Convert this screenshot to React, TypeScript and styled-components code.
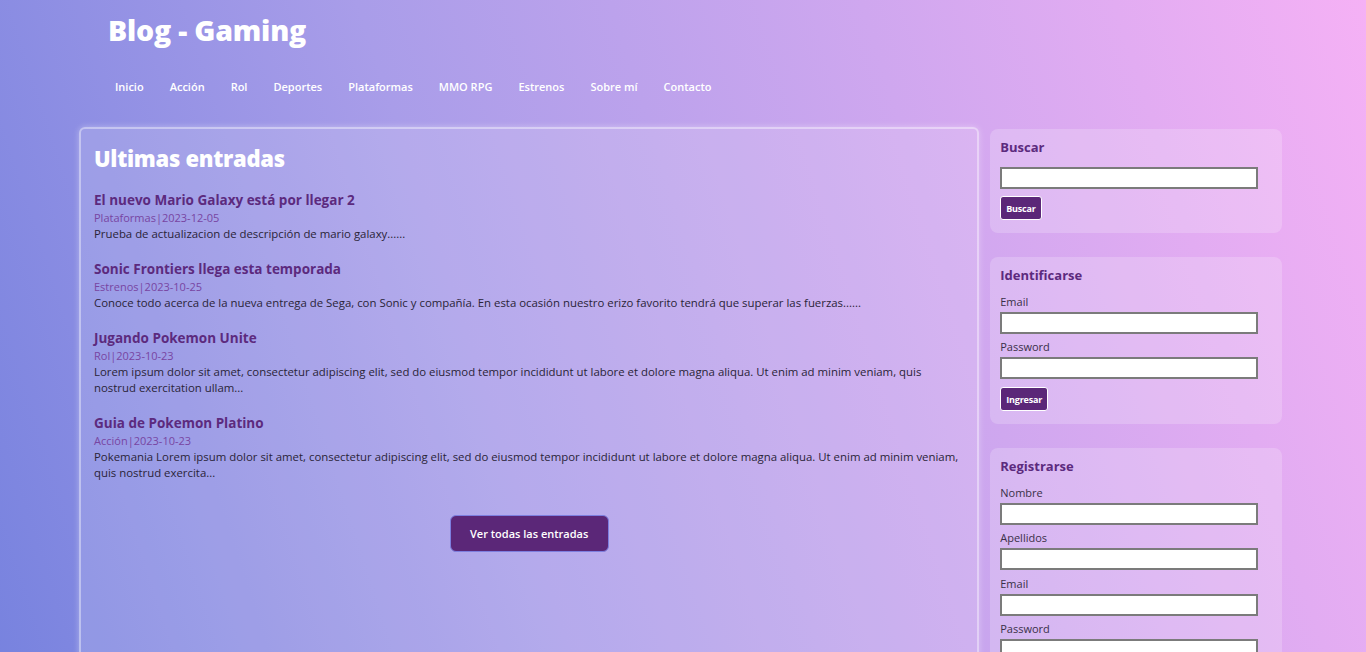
import React from "react";
import styled, { createGlobalStyle } from "styled-components";

const GlobalStyle = createGlobalStyle`
  html {
    background: linear-gradient(72deg, #6f7edd 0%, #a99de9 40%, #f5b1f5 100%);
    min-height: 100%;
  }
  body {
    margin: 0;
    font-family: "Open Sans", "Noto Sans", sans-serif;
    color: #2b2540;
  }
  * { box-sizing: border-box; }
`;

const Page = styled.div`
  width: 1203px;
  margin-left: 79px;
  padding-bottom: 264px;
`;

const Header = styled.header`
  display: flex;
  flex-direction: column;
  padding-top: 9px;
`;

const SiteTitle = styled.h1`
  margin: 0 0 0 29px;
  font-size: 28.5px;
  line-height: 42px;
  font-weight: 800;
  color: #ffffff;
  letter-spacing: -0.2px;
`;

const Nav = styled.nav`
  display: flex;
  margin: 27px 0 0 23px;
`;

const NavLink = styled.a`
  padding: 0 13px;
  font-size: 11px;
  line-height: 17px;
  font-weight: 600;
  color: #ffffff;
  text-decoration: none;
`;

const Layout = styled.div`
  display: flex;
  align-items: stretch;
  gap: 11px;
  margin-top: 32px;
`;

const Main = styled.main`
  width: 901px;
  padding: 13px 13px 40px;
  background: rgba(255, 255, 255, 0.14);
  border: 2px solid rgba(255, 255, 255, 0.4);
  border-radius: 6px;
  box-shadow: 0 0 6px rgba(255, 255, 255, 0.35);
  display: flex;
  flex-direction: column;
`;

const SectionTitle = styled.h2`
  margin: 0 0 15px;
  font-size: 22px;
  line-height: 33px;
  font-weight: 800;
  color: #ffffff;
  letter-spacing: -0.3px;
`;

const Post = styled.article`
  margin-bottom: 17px;
`;

const PostTitle = styled.h3`
  margin: 0;
  font-size: 13.5px;
  line-height: 20px;
  font-weight: 700;
  color: #5c2a7e;
`;

const PostMeta = styled.div`
  font-size: 11px;
  line-height: 16px;
  color: #7845a2;
`;

const PostText = styled.p`
  margin: 0;
  font-size: 11.4px;
  line-height: 16px;
  color: #2a2438;
`;

const MoreButton = styled.button`
  align-self: center;
  margin-top: 17px;
  width: 159px;
  height: 37px;
  background: #5b2778;
  color: #ffffff;
  border: 1px solid #7d7fe0;
  border-radius: 6px;
  font-family: inherit;
  font-size: 11px;
  font-weight: 600;
  cursor: pointer;
`;

const Sidebar = styled.aside`
  width: 292px;
  display: flex;
  flex-direction: column;
  gap: 24px;
  padding-top: 2px;
`;

const Widget = styled.section`
  padding: 8px 10px 13px;
  background: rgba(255, 255, 255, 0.2);
  border-radius: 8px;
  display: flex;
  flex-direction: column;
  align-items: flex-start;
`;

const WidgetTitle = styled.h4<{ $gap: number }>`
  margin: 0 0 ${(p) => p.$gap}px;
  font-size: 13px;
  line-height: 20px;
  font-weight: 700;
  color: #5c2a7e;
`;

const Field = styled.div`
  display: flex;
  flex-direction: column;
  margin-bottom: 6.5px;
`;

const Label = styled.label`
  font-size: 11px;
  line-height: 14px;
  margin-bottom: 3px;
  color: #3a3048;
`;

const Input = styled.input`
  width: 258px;
  height: 22px;
  border: 2px solid #7b7b7b;
  background: #ffffff;
  padding: 0 4px;
  font-family: inherit;
`;

const SmallButton = styled.button<{ $top: number }>`
  margin-top: ${(p) => p.$top}px;
  height: 24px;
  padding: 0 5px;
  background: #5b2778;
  color: #ffffff;
  border: 1px solid #ffffff;
  border-radius: 3px;
  font-family: inherit;
  font-size: 9px;
  font-weight: 700;
  letter-spacing: -0.2px;
  cursor: pointer;
`;

const Footer = styled.footer``;

const navItems = [
  "Inicio",
  "Acción",
  "Rol",
  "Deportes",
  "Plataformas",
  "MMO RPG",
  "Estrenos",
  "Sobre mí",
  "Contacto",
];

const posts = [
  {
    title: "El nuevo Mario Galaxy está por llegar 2",
    cat: "Plataformas",
    date: "2023-12-05",
    text: "Prueba de actualizacion de descripción de mario galaxy......",
  },
  {
    title: "Sonic Frontiers llega esta temporada",
    cat: "Estrenos",
    date: "2023-10-25",
    text: "Conoce todo acerca de la nueva entrega de Sega, con Sonic y compañía. En esta ocasión nuestro erizo favorito tendrá que superar las fuerzas......",
  },
  {
    title: "Jugando Pokemon Unite",
    cat: "Rol",
    date: "2023-10-23",
    text: "Lorem ipsum dolor sit amet, consectetur adipiscing elit, sed do eiusmod tempor incididunt ut labore et dolore magna aliqua. Ut enim ad minim veniam, quis nostrud exercitation ullam...",
  },
  {
    title: "Guia de Pokemon Platino",
    cat: "Acción",
    date: "2023-10-23",
    text: "Pokemania Lorem ipsum dolor sit amet, consectetur adipiscing elit, sed do eiusmod tempor incididunt ut labore et dolore magna aliqua. Ut enim ad minim veniam, quis nostrud exercita...",
  },
];

export default function App() {
  return (
    <>
      <GlobalStyle />
      <Page>
        <Header>
          <SiteTitle>Blog - Gaming</SiteTitle>
          <Nav>
            {navItems.map((n) => (
              <NavLink key={n} href="#">
                {n}
              </NavLink>
            ))}
          </Nav>
        </Header>
        <Layout>
          <Main>
            <SectionTitle>Ultimas entradas</SectionTitle>
            {posts.map((p) => (
              <Post key={p.title}>
                <PostTitle>{p.title}</PostTitle>
                <PostMeta>
                  {p.cat}|{p.date}
                </PostMeta>
                <PostText>{p.text}</PostText>
              </Post>
            ))}
            <MoreButton>Ver todas las entradas</MoreButton>
          </Main>
          <Sidebar>
            <Widget>
              <WidgetTitle $gap={10}>Buscar</WidgetTitle>
              <Input type="text" />
              <SmallButton $top={7}>Buscar</SmallButton>
            </Widget>
            <Widget>
              <WidgetTitle $gap={9.5}>Identificarse</WidgetTitle>
              <Field>
                <Label>Email</Label>
                <Input type="email" />
              </Field>
              <Field>
                <Label>Password</Label>
                <Input type="password" />
              </Field>
              <SmallButton $top={1.5}>Ingresar</SmallButton>
            </Widget>
            <Widget>
              <WidgetTitle $gap={9.5}>Registrarse</WidgetTitle>
              <Field>
                <Label>Nombre</Label>
                <Input type="text" />
              </Field>
              <Field>
                <Label>Apellidos</Label>
                <Input type="text" />
              </Field>
              <Field>
                <Label>Email</Label>
                <Input type="email" />
              </Field>
              <Field>
                <Label>Password</Label>
                <Input type="password" />
              </Field>
              <SmallButton $top={1.5}>Registrarse</SmallButton>
            </Widget>
          </Sidebar>
        </Layout>
        <Footer />
      </Page>
    </>
  );
}
